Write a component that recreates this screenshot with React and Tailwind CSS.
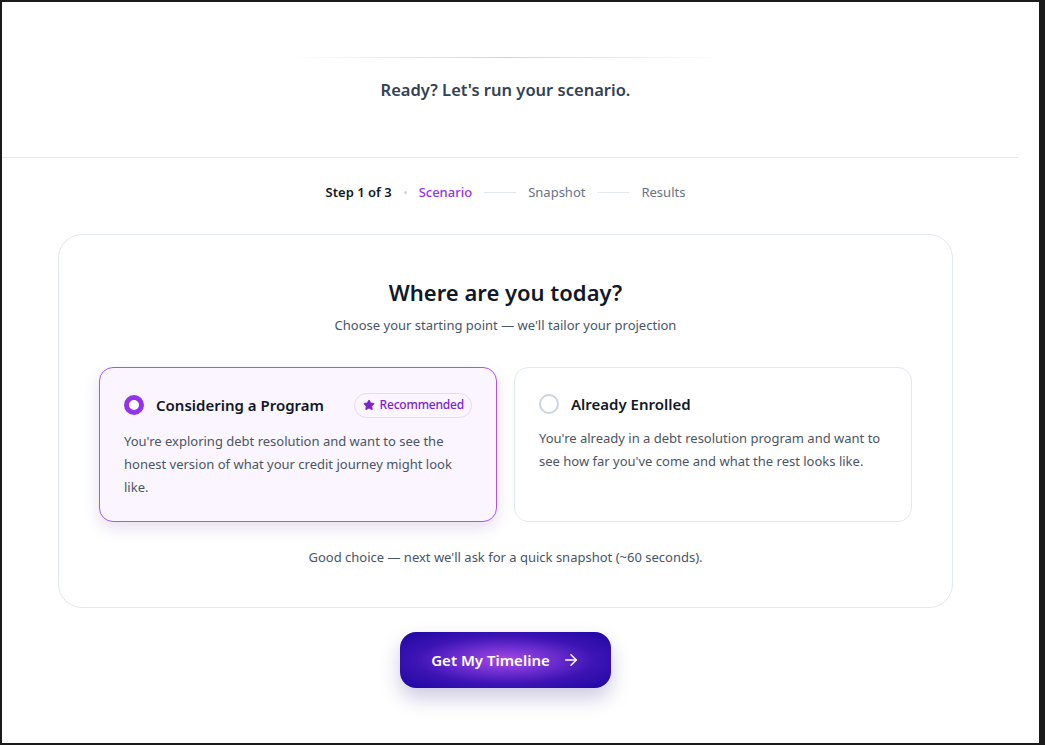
import React, { useState } from "react";
import { ArrowRight, Star } from "lucide-react";

const options = [
  {
    id: "considering",
    title: "Considering a Program",
    badge: "Recommended",
    text: "You're exploring debt resolution and want to see the honest version of what your credit journey might look like.",
  },
  {
    id: "enrolled",
    title: "Already Enrolled",
    text: "You're already in a debt resolution program and want to see how far you've come and what the rest looks like.",
  },
];

const OptionCard = ({ option, selected, onSelect }) => (
  <button
    onClick={() => onSelect(option.id)}
    className={`flex flex-col items-start text-left rounded-[14px] px-6 pt-[25px] pb-6 h-[155px] ${
      selected
        ? "border-[1.5px] border-[#a855f7] bg-[#faf5ff] shadow-[0_6px_16px_rgba(76,29,149,0.14)]"
        : "border border-[#e2e8f0] bg-white"
    }`}
  >
    <div className="flex items-center w-full">
      <span
        className={`w-5 h-5 rounded-full shrink-0 ${
          selected ? "border-[5px] border-[#9333ea] bg-white" : "border-2 border-[#cbd5e1] bg-white"
        }`}
      />
      <span className="ml-3 text-[15px] font-semibold text-[#111827]">{option.title}</span>
      {option.badge && (
        <span className="ml-auto flex items-center gap-[5px] rounded-full border border-[#e9d5ff] pl-[8px] pr-[7px] h-[25px] text-[12px] font-medium text-[#7e22ce]">
          <Star className="w-3 h-3 fill-[#7e22ce] text-[#7e22ce]" />
          <span className="tracking-[-0.2px]">{option.badge}</span>
        </span>
      )}
    </div>
    <p className="mt-[12px] text-[13px] leading-[23px] text-[#4b5563]">{option.text}</p>
  </button>
);

export default function App() {
  const [choice, setChoice] = useState("considering");

  return (
    <div
      className="w-[1045px] h-[745px] bg-white border-t-2 border-l-2 border-b-2 border-r-[6px] border-[#1a1a1a] overflow-hidden"
      style={{ fontFamily: '"Noto Sans", "Open Sans", sans-serif' }}
    >
      <div className="w-[1016px] flex flex-col">
        <div className="w-[1007px] flex flex-col items-center pt-[55px]">
          <div className="w-[430px] h-px bg-gradient-to-r from-transparent via-[#cbd5e1] to-transparent" />
          <h2 className="mt-[20px] text-[16.5px] font-semibold text-[#334155]">Ready? Let's run your scenario.</h2>
        </div>
        <div className="mt-[54px] h-px w-full bg-[#e2e8f0]" />
        <div className="w-[1007px] flex flex-col items-center">
          <div className="mt-[25px] flex items-center text-[13px]">
            <span className="font-semibold text-[#111827]">Step 1 of 3</span>
            <span className="mx-3 w-[3px] h-[3px] rounded-full bg-[#cbd5e1]" />
            <span className="font-medium text-[#9333ea]">Scenario</span>
            <span className="mx-3 w-8 h-px bg-[#e2e8f0]" />
            <span className="text-[#64748b]">Snapshot</span>
            <span className="mx-3 w-8 h-px bg-[#e2e8f0]" />
            <span className="text-[#64748b]">Results</span>
          </div>

          <div className="mt-[32px] w-[895px] h-[374px] rounded-[24px] border border-[#e2e8f0] flex flex-col items-center pt-[41px] px-10">
            <h1 className="text-[22px] font-semibold text-[#111827] leading-[32px]">Where are you today?</h1>
            <p className="mt-[8px] text-[13px] text-[#475569]">Choose your starting point — we'll tailor your projection</p>
            <div className="mt-[31px] grid grid-cols-2 gap-[17px] w-full">
              {options.map((o) => (
                <OptionCard key={o.id} option={o} selected={choice === o.id} onSelect={setChoice} />
              ))}
            </div>
            <p className="mt-[26px] text-[13px] text-[#475569]">
              Good choice — next we'll ask for a quick snapshot (~60 seconds).
            </p>
          </div>

          <button className="mt-[24px] w-[211px] h-[56px] rounded-[16px] flex items-center justify-center gap-3 text-white text-[15px] font-semibold bg-[radial-gradient(ellipse_at_center,#a848de_0%,#7a34d6_25%,#3d14b4_60%,#1d06a2_100%)] shadow-[0_10px_20px_rgba(30,10,120,0.22)]">
            Get My Timeline
            <ArrowRight className="w-[18px] h-[18px]" strokeWidth={2} />
          </button>
        </div>
      </div>
    </div>
  );
}
